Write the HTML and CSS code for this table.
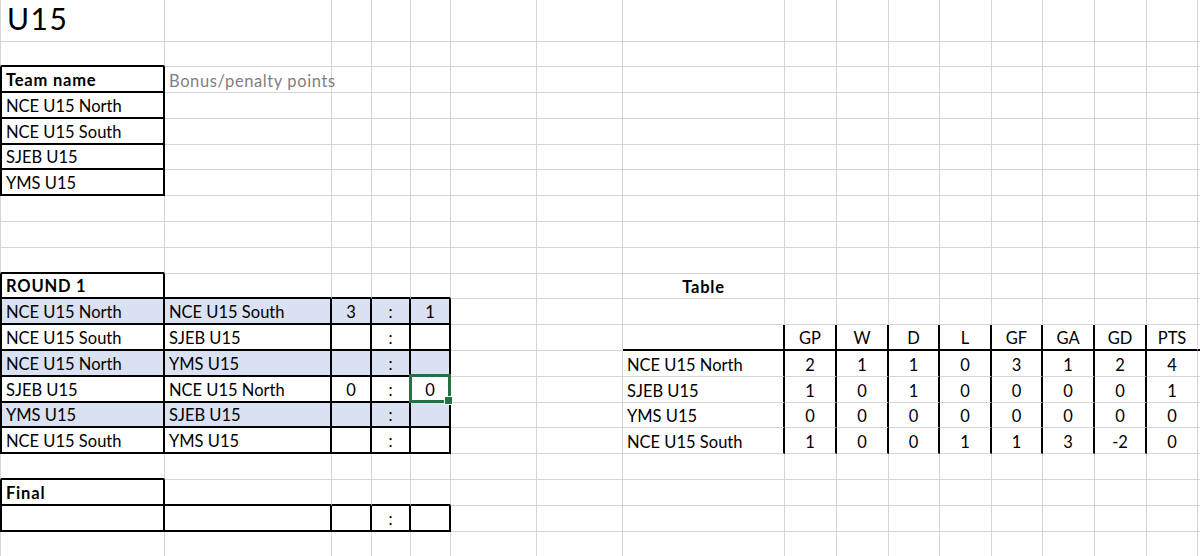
FILE: index.html
```html
<!DOCTYPE html>
<html lang="en">
<head>
<meta charset="utf-8">
<title>U15</title>
<link rel="stylesheet" href="styles.css">
</head>
<body>
<div class="sheet">
  <div class="row"><div class="title">U15</div><div></div><div></div><div></div><div></div><div></div><div></div><div></div><div></div><div></div><div></div><div></div><div></div><div></div><div></div><div></div><div></div></div>
  <div class="row"><div class="d"></div><div></div><div></div><div></div><div></div><div></div><div></div><div></div><div></div><div></div><div></div><div></div><div></div><div></div><div></div><div></div><div></div></div>
  <div class="row"><div class="l r d b">Team name</div><div class="muted">Bonus/penalty points</div><div></div><div></div><div></div><div></div><div></div><div></div><div></div><div></div><div></div><div></div><div></div><div></div><div></div><div></div><div></div></div>
  <div class="row"><div class="l r d">NCE U15 North</div><div></div><div></div><div></div><div></div><div></div><div></div><div></div><div></div><div></div><div></div><div></div><div></div><div></div><div></div><div></div><div></div></div>
  <div class="row"><div class="l r d">NCE U15 South</div><div></div><div></div><div></div><div></div><div></div><div></div><div></div><div></div><div></div><div></div><div></div><div></div><div></div><div></div><div></div><div></div></div>
  <div class="row"><div class="l r d">SJEB U15</div><div></div><div></div><div></div><div></div><div></div><div></div><div></div><div></div><div></div><div></div><div></div><div></div><div></div><div></div><div></div><div></div></div>
  <div class="row"><div class="l r d">YMS U15</div><div></div><div></div><div></div><div></div><div></div><div></div><div></div><div></div><div></div><div></div><div></div><div></div><div></div><div></div><div></div><div></div></div>
  <div class="row"><div></div><div></div><div></div><div></div><div></div><div></div><div></div><div></div><div></div><div></div><div></div><div></div><div></div><div></div><div></div><div></div><div></div></div>
  <div class="row"><div></div><div></div><div></div><div></div><div></div><div></div><div></div><div></div><div></div><div></div><div></div><div></div><div></div><div></div><div></div><div></div><div></div></div>
  <div class="row"><div class="d"></div><div></div><div></div><div></div><div></div><div></div><div></div><div></div><div></div><div></div><div></div><div></div><div></div><div></div><div></div><div></div><div></div></div>
  <div class="row"><div class="l r d b">ROUND 1</div><div class="d"></div><div class="d"></div><div class="d"></div><div class="d"></div><div></div><div></div><div class="b n">Table</div><div></div><div></div><div></div><div></div><div></div><div></div><div></div><div></div><div></div></div>
  <div class="row"><div class="l r d hl">NCE U15 North</div><div class="r d hl">NCE U15 South</div><div class="r d hl n">3</div><div class="r d hl n">:</div><div class="r d hl n">1</div><div></div><div></div><div></div><div></div><div></div><div></div><div></div><div></div><div></div><div></div><div></div><div></div></div>
  <div class="row"><div class="l r d">NCE U15 South</div><div class="r d">SJEB U15</div><div class="r d n"></div><div class="r d n">:</div><div class="r d n"></div><div></div><div></div><div class="r d"></div><div class="r d n">GP</div><div class="r d n">W</div><div class="r d n">D</div><div class="r d n">L</div><div class="r d n">GF</div><div class="r d n">GA</div><div class="r d n">GD</div><div class="d n">PTS</div><div class="d"></div></div>
  <div class="row"><div class="l r d hl">NCE U15 North</div><div class="r d hl">YMS U15</div><div class="r d hl n"></div><div class="r d hl n">:</div><div class="r d hl n"></div><div></div><div></div><div class="r">NCE U15 North</div><div class="r n">2</div><div class="r n">1</div><div class="r n">1</div><div class="r n">0</div><div class="r n">3</div><div class="r n">1</div><div class="r n">2</div><div class="n">4</div><div></div></div>
  <div class="row"><div class="l r d">SJEB U15</div><div class="r d">NCE U15 North</div><div class="r d n">0</div><div class="r d n">:</div><div class="r d n sel">0<span class="handle"></span></div><div></div><div></div><div class="r">SJEB U15</div><div class="r n">1</div><div class="r n">0</div><div class="r n">1</div><div class="r n">0</div><div class="r n">0</div><div class="r n">0</div><div class="r n">0</div><div class="n">1</div><div></div></div>
  <div class="row"><div class="l r d hl">YMS U15</div><div class="r d hl">SJEB U15</div><div class="r d hl n"></div><div class="r d hl n">:</div><div class="r d hl n"></div><div></div><div></div><div class="r">YMS U15</div><div class="r n">0</div><div class="r n">0</div><div class="r n">0</div><div class="r n">0</div><div class="r n">0</div><div class="r n">0</div><div class="r n">0</div><div class="n">0</div><div></div></div>
  <div class="row"><div class="l r d">NCE U15 South</div><div class="r d">YMS U15</div><div class="r d n"></div><div class="r d n">:</div><div class="r d n"></div><div></div><div></div><div class="r">NCE U15 South</div><div class="r n">1</div><div class="r n">0</div><div class="r n">0</div><div class="r n">1</div><div class="r n">1</div><div class="r n">3</div><div class="r n">-2</div><div class="n">0</div><div></div></div>
  <div class="row"><div class="d"></div><div></div><div></div><div></div><div></div><div></div><div></div><div></div><div></div><div></div><div></div><div></div><div></div><div></div><div></div><div></div><div></div></div>
  <div class="row"><div class="l r d b">Final</div><div class="d"></div><div class="d"></div><div class="d"></div><div class="d"></div><div></div><div></div><div></div><div></div><div></div><div></div><div></div><div></div><div></div><div></div><div></div><div></div></div>
  <div class="row"><div class="l r d"></div><div class="r d"></div><div class="r d n"></div><div class="r d n">:</div><div class="r d n"></div><div></div><div></div><div></div><div></div><div></div><div></div><div></div><div></div><div></div><div></div><div></div><div></div></div>
  <div class="row"><div></div><div></div><div></div><div></div><div></div><div></div><div></div><div></div><div></div><div></div><div></div><div></div><div></div><div></div><div></div><div></div><div></div></div>
</div>
</body>
</html>
```
FILE: styles.css
```css
html, body {
  margin: 0;
  padding: 0;
  background: #fff;
  overflow: hidden;
}

.sheet {
  display: grid;
  grid-template-columns: 165px 167px 40px 39px 40px 86px 86px 162px 52px 52px 51px 52px 51px 52px 52px 51px 60px;
  grid-template-rows: 42px 25px 26px 26px 26px 25px 26px 26px 26px 26px 25px 26px 26px 26px 26px 25px 26px 26px 26px 26px 30px;
  font-family: "Lato", "Open Sans", sans-serif;
  font-size: 16.5px;
  color: #000;
}

.row {
  display: contents;
}

.row > div {
  box-sizing: border-box;
  border-right: 1px solid #d6d6d6;
  border-bottom: 1px solid #d6d6d6;
  padding: 0 4px 1px;
  display: flex;
  align-items: flex-end;
  line-height: 20px;
  white-space: nowrap;
  min-width: 0;
}

.row > div:first-child {
  border-left: 1px solid #d6d6d6;
}

.row > div.l {
  border-left: 2px solid #000;
}

.row > div.r {
  border-right: 2px solid #000;
}

.row > div.d {
  border-bottom: 2px solid #000;
}

.row > div.n {
  justify-content: center;
}

.row > div.b {
  font-weight: 700;
  letter-spacing: 0.8px;
}

.row > div.hl {
  background: #d9e1f2;
}

.row > div.muted {
  color: #7f7f7f;
  letter-spacing: 0.6px;
}

.row > div.title {
  font-size: 30px;
  line-height: 36px;
  letter-spacing: 1.5px;
  padding: 0 6px 5px;
}

.row > div.sel {
  position: relative;
}

.sel::before {
  content: "";
  position: absolute;
  top: -3px;
  left: -2px;
  right: -2px;
  bottom: -2px;
  border: 3px solid #217346;
}

.handle {
  position: absolute;
  right: -4px;
  bottom: -4px;
  width: 9px;
  height: 9px;
  box-sizing: border-box;
  background: #217346;
  border: 1px solid #fff;
}
```
